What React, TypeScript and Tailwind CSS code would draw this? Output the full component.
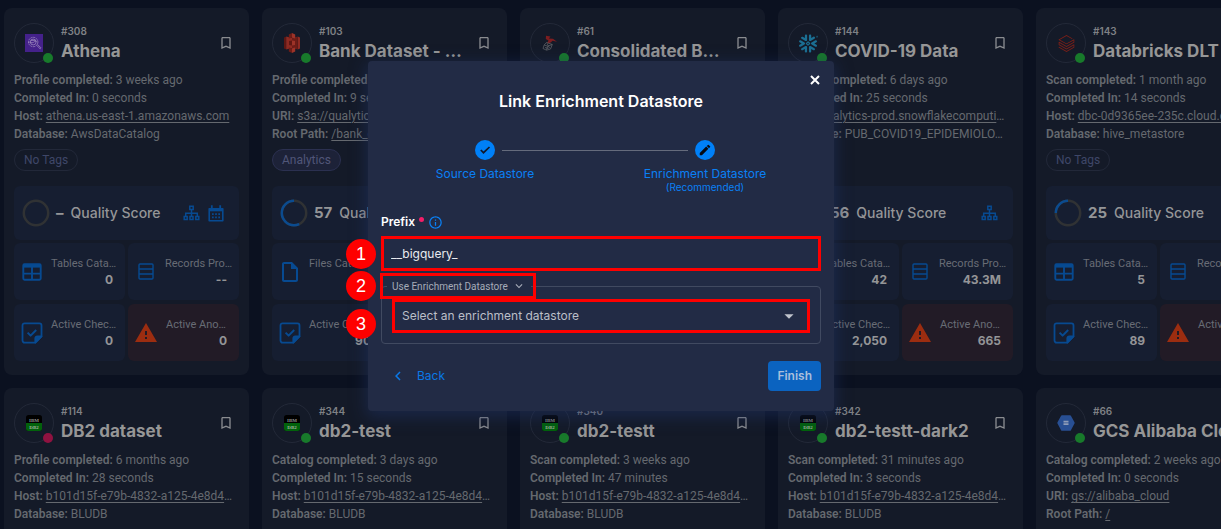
import React from 'react';
import {
  MdBookmarkBorder,
  MdChevronLeft,
  MdEdit,
  MdExpandMore,
  MdInfoOutline,
  MdArrowDropDown,
  MdWarning,
  MdOutlineInsertDriveFile,
} from 'react-icons/md';
import { SiDatabricks, SiSnowflake } from 'react-icons/si';

type Brand = 'athena' | 's3' | 'mssql' | 'snowflake' | 'databricks' | 'db2' | 'gcs';

type Detail = { label: string; value: string; link?: boolean; cut?: boolean };

type Store = {
  id: string;
  name: string;
  brand: Brand;
  down?: boolean;
  details: Detail[];
  tag?: string;
  tagFilled?: boolean;
  score: string;
  files?: boolean;
  calendar?: boolean;
  catalogued: string;
  records: string;
  checks: string;
  anomalies: string;
};

const db2Details = (verb: string, when: string, took: string): Detail[] => [
  { label: `${verb} completed:`, value: when },
  { label: 'Completed In:', value: took },
  { label: 'Host:', value: 'b101d15f-e79b-4832-a125-4e8d4', link: true, cut: true },
  { label: 'Database:', value: 'BLUDB' },
];

const empty = { tag: 'No Tags', score: '–', catalogued: '0', records: '--', checks: '0', anomalies: '0' };

const stores: Store[] = [
  {
    ...empty,
    id: '#308',
    name: 'Athena',
    brand: 'athena',
    details: [
      { label: 'Profile completed:', value: '3 weeks ago' },
      { label: 'Completed In:', value: '0 seconds' },
      { label: 'Host:', value: 'athena.us-east-1.amazonaws.com', link: true },
      { label: 'Database:', value: 'AwsDataCatalog' },
    ],
    calendar: true,
  },
  {
    id: '#103',
    name: 'Bank Dataset - …',
    brand: 's3',
    details: [
      { label: 'Profile completed:', value: '3 weeks ago' },
      { label: 'Completed In:', value: '9 seconds' },
      { label: 'URI:', value: 's3a://qualytics-data', link: true },
      { label: 'Root Path:', value: '/bank_dataset', link: true },
    ],
    tag: 'Analytics',
    tagFilled: true,
    score: '57',
    files: true,
    catalogued: '5',
    records: '10.1K',
    checks: '90',
    anomalies: '12',
  },
  {
    ...empty,
    id: '#61',
    name: 'Consolidated B…',
    brand: 'mssql',
    details: [
      { label: 'Profile completed:', value: '1 week ago' },
      { label: 'Completed In:', value: '6 seconds' },
      { label: 'Host:', value: 'database.windows.net', link: true },
      { label: 'Database:', value: 'qualytics' },
    ],
  },
  {
    id: '#144',
    name: 'COVID-19 Data',
    brand: 'snowflake',
    details: [
      { label: 'Profile completed:', value: '6 days ago' },
      { label: 'Completed In:', value: '25 seconds' },
      { label: 'Host:', value: 'analytics-prod.snowflakecomputi', link: true, cut: true },
      { label: 'Database:', value: 'PUB_COVID19_EPIDEMIOLO…' },
    ],
    score: '56',
    catalogued: '42',
    records: '43.3M',
    checks: '2,050',
    anomalies: '665',
  },
  {
    id: '#143',
    name: 'Databricks DLT',
    brand: 'databricks',
    details: [
      { label: 'Scan completed:', value: '1 month ago' },
      { label: 'Completed In:', value: '14 seconds' },
      { label: 'Host:', value: 'dbc-0d9365ee-235c.cloud.data', link: true, cut: true },
      { label: 'Database:', value: 'hive_metastore' },
    ],
    tag: 'No Tags',
    score: '25',
    catalogued: '5',
    records: '98.6K',
    checks: '89',
    anomalies: '30',
  },
  { ...empty, id: '#114', name: 'DB2 dataset', brand: 'db2', down: true, details: db2Details('Profile', '6 months ago', '28 seconds') },
  { ...empty, id: '#344', name: 'db2-test', brand: 'db2', details: db2Details('Catalog', '3 days ago', '15 seconds') },
  { ...empty, id: '#340', name: 'db2-testt', brand: 'db2', details: db2Details('Scan', '3 weeks ago', '47 minutes') },
  { ...empty, id: '#342', name: 'db2-testt-dark2', brand: 'db2', details: db2Details('Scan', '31 minutes ago', '3 seconds') },
  {
    ...empty,
    id: '#66',
    name: 'GCS Alibaba Cloud',
    brand: 'gcs',
    details: [
      { label: 'Catalog completed:', value: '2 weeks ago' },
      { label: 'Completed In:', value: '0 seconds' },
      { label: 'URI:', value: 'gs://alibaba_cloud', link: true },
      { label: 'Root Path:', value: '/', link: true },
    ],
  },
];

function BrandMark({ brand }: { brand: Brand }) {
  switch (brand) {
    case 'athena':
      return (
        <svg viewBox="0 0 18 18" className="size-[18px]" fill="none">
          <rect width="18" height="18" fill="#44218a" />
          <g stroke="#9a86bd" strokeWidth="0.8">
            <circle cx="8.2" cy="8" r="4.7" strokeDasharray="2 0.7" />
            <circle cx="8.2" cy="8" r="2.9" />
            <path d="M3 8.6c2-1.6 3.600 1.300 5.400-.2s2-.9 3.300-1M5.800 6.400h5M11.500 11.200l3.700 3.600M12.500 10.400l3.400 3.400-.8 1" />
          </g>
        </svg>
      );
    case 's3':
      return (
        <svg viewBox="0 0 18 20" className="h-5 w-[18px]">
          <path d="M1 4.500 3.200 3.500V16.500L1 15.500z" fill="#5f1713" />
          <path d="M17 4.500 14.800 3.500V16.500L17 15.500z" fill="#8e2a22" />
          <path d="M3.200 3.500 9 5v10l-5.800 1.500z" fill="#8e2a22" />
          <path d="M14.800 3.500 9 5v10l5.800 1.500z" fill="#6d1c17" />
          <path d="M9 0 5.800 1.600V5.600L9 4.800z" fill="#6d1c17" />
          <path d="M9 0l3.200 1.600v4L9 4.800zM9 7.600l3 .4v4l-3 .4z" fill="#9d3328" />
          <path d="M9 7.600 6 8v4l3 .4z" fill="#5f1713" />
          <path d="M9 20l-3.200-1.600v-4L9 15.200z" fill="#6d1c17" />
          <path d="M9 20l3.200-1.600v-4L9 15.200z" fill="#9d3328" />
        </svg>
      );
    case 'mssql':
      return (
        <svg viewBox="0 0 16 16" className="size-4" fill="none">
          <path d="M4 .8 8.500 1.500 6.800 3.500 11 3.800 15 6.800 10.500 5.800 8.800 7.500 5 8.500 6.500 5.500 3.800 4z" fill="#7d1d20" />
          <path d="M4.500 7.500 2.200 10 1 13.500l3.500 1.700 4-1.200 1.800-4.500z M2.200 10l3.500 1.200L4.500 15 M5.700 11.200l4.500-1.700 M3 12.500l3.500 1 M5 8.500l2.500 4.500" stroke="#66686d" strokeWidth="0.7" />
        </svg>
      );
    case 'snowflake':
      return <SiSnowflake className="size-[19px] text-[#1b6f93]" />;
    case 'databricks':
      return <SiDatabricks className="size-[17px] text-[#7d1f18]" />;
    case 'db2':
      return (
        <svg viewBox="0 0 16 16" className="size-4">
          <rect width="16" height="16" rx="2.500" fill="#000" />
          <path d="M0 8h16v5.500A2.500 2.500 0 0 1 13.500 16h-11A2.500 2.500 0 0 1 0 13.500z" fill="#02620b" />
          <text x="8" y="6.600" textAnchor="middle" fontSize="5" fontFamily="Liberation Serif, serif" fontWeight="700" fill="#8d8d8d">IBM</text>
          <text x="8" y="13.600" textAnchor="middle" fontSize="5" fontFamily="Liberation Serif, serif" fontWeight="700" fill="#9fb09f">DB2</text>
        </svg>
      );
    default:
      return (
        <svg viewBox="0 0 18 18" className="size-[18px]">
          <path d="M5 1.200h8a1 1 0 0 1 .9.500l3.600 6.600a1.300 1.300 0 0 1 0 1.300l-3.600 6.700a1 1 0 0 1-.9.500H5a1 1 0 0 1-.9-.5L.5 9.600a1.300 1.300 0 0 1 0-1.300l3.600-6.600a1 1 0 0 1 .9-.5z" fill="#284f93" />
          <path d="M6.500 6.800h5v1.700h-5zM6.500 9.300h5V11h-5z" fill="#8d9cb8" />
        </svg>
      );
  }
}

function SitemapIcon() {
  return (
    <svg viewBox="0 0 17 16" className="h-4 w-[17px]" fill="none" stroke="currentColor" strokeWidth="1.500">
      <path d="M6.800 1.200h3.400v3.300H6.800zM1.200 11.500h3v3h-3zM7 11.500h3v3H7zM12.800 11.500h3v3h-3zM8.500 4.500v7M2.700 11.500V8.200h11.600v3.300" />
    </svg>
  );
}

function CalendarIcon() {
  return (
    <svg viewBox="0 0 16 17" className="h-[17px] w-4" fill="none" stroke="currentColor">
      <path d="M1.200 3.700h13.600v12H1.200z" strokeWidth="1.600" strokeLinejoin="round" />
      <path d="M1 4.700h14" strokeWidth="3.200" />
      <path d="M3.800.2v3M12.200.2v3" strokeWidth="1.800" />
      <path d="M4 9.200h8M4 12.300h8" strokeWidth="1.700" strokeDasharray="1.700 1.450" />
    </svg>
  );
}

function TableIcon() {
  return (
    <svg viewBox="0 0 20 18" className="h-[18px] w-5" fill="none" stroke="currentColor">
      <rect x="1.300" y="1.300" width="17.400" height="15.400" rx="1.200" strokeWidth="1.900" />
      <path d="M1.500 3h17" strokeWidth="3.200" />
      <path d="M1.500 10.600h17M10 4v12.500" strokeWidth="1.900" />
    </svg>
  );
}

function RecordsIcon() {
  return (
    <svg viewBox="0 0 16 17" className="h-[17px] w-4" fill="none" stroke="currentColor" strokeWidth="1.400">
      <rect x="1" y="1" width="14" height="15" rx="1" />
      <path d="M1 6h14M1 11h14" />
    </svg>
  );
}

function NoteCheckIcon() {
  return (
    <svg viewBox="0 0 22 22" className="size-[22px]" fill="none" stroke="currentColor" strokeWidth="1.800" strokeLinejoin="round">
      <path d="M3.500 1.400h15a2 2 0 0 1 2 2v11l-6.200 6.200H3.500a2 2 0 0 1-2-2V3.400a2 2 0 0 1 2-2z" />
      <path d="M14.300 20.600v-4.200a2 2 0 0 1 2-2h4.200z" fill="currentColor" />
      <path d="M6.600 10.600l3 3 5.600-5.600" strokeWidth="2" />
    </svg>
  );
}

function ScoreRing({ score }: { score: string }) {
  const share = Number(score) || 0;
  return (
    <svg viewBox="0 0 28 28" className="size-7 shrink-0 -rotate-90" fill="none" strokeWidth="2.500">
      <circle cx="14" cy="14" r="12.200" stroke="#303234" />
      {share > 0 && (
        <circle
          cx="14"
          cy="14"
          r="12.200"
          stroke="#0b4b8f"
          pathLength={100}
          strokeDasharray={`${share} 100`}
          transform="matrix(1 0 0 -1 0 28)"
        />
      )}
    </svg>
  );
}

function Stat({ icon, label, value, alert }: { icon: React.ReactNode; label: string; value: string; alert?: boolean }) {
  return (
    <div className={`flex h-[57px] min-w-0 items-center rounded-md pr-3 ${alert ? 'bg-[#221b26] pl-[6px]' : 'bg-[#161e31] pl-[7px]'}`}>
      <span className={`flex shrink-0 justify-center ${alert ? 'w-6 text-[#9c2d10]' : 'w-[22px] text-[#074a91]'}`}>{icon}</span>
      <div className="flex min-w-0 flex-1 flex-col pl-2">
        <span className="font-['Roboto',sans-serif] text-[11px] leading-4 whitespace-nowrap text-[#686c75]">{label}</span>
        <span className="text-right text-xs leading-4 font-bold text-[#949597]">{value}</span>
      </div>
    </div>
  );
}

function StoreCard({ store }: { store: Store }) {
  return (
    <article className="rounded-lg bg-[#141a28] px-[10px] pt-[15px] pb-[14px]">
      <header className="flex h-10 items-center gap-[7px]">
        <div className="relative flex size-10 shrink-0 items-center justify-center rounded-full border border-[#232938]">
          <BrandMark brand={store.brand} />
          <span className={`absolute right-0 -bottom-px size-[10px] rounded-full ${store.down ? 'bg-[#8f1240]' : 'bg-[#187a2b]'}`} />
        </div>
        <div className="min-w-0 flex-1">
          <p className="text-[10px] leading-4 font-semibold text-[#7f8185]">{store.id}</p>
          <h2 className="text-[17px] leading-6 font-bold whitespace-nowrap text-[#969696]">{store.name}</h2>
        </div>
        <button type="button" aria-label={`Bookmark ${store.name}`} className="mr-[5px] text-[#8a8c90]">
          <MdBookmarkBorder className="size-4" />
        </button>
      </header>
      <ul className="mt-2 font-['Roboto',sans-serif] text-xs leading-[18px] whitespace-nowrap text-[#65696f]">
        {store.details.map((d) => (
          <li key={d.label}>
            <span className="font-semibold">{d.label}</span>{' '}
            {d.link ? <a href="#" className="underline underline-offset-2">{d.value}</a> : d.value}
            {d.cut && '…'}
          </li>
        ))}
      </ul>
      <div className="mt-[6px] flex h-[22px]">
        {store.tag && (
          <span className={`flex items-center rounded-full border px-[9px] font-['Roboto',sans-serif] text-xs ${store.tagFilled ? 'border-[#2b3050] bg-[#1d2238] text-[#515678]' : 'border-[#222839] text-[#3f4768]'}`}>
            {store.tag}
          </span>
        )}
      </div>
      <div className="mt-[15px] flex h-[54px] items-center rounded-md bg-[#161e31] pr-[15px] pl-2">
        <ScoreRing score={store.score} />
        <span className="pl-[6px] text-[15px] font-bold text-[#949597]">{store.score}</span>
        <span className="flex-1 pl-[7px] text-sm font-medium whitespace-nowrap text-[#949597]">Quality Score</span>
        <span className="flex items-center gap-2 text-[#074a91]">
          <SitemapIcon />
          {store.calendar && <CalendarIcon />}
        </span>
      </div>
      <div className="mt-[3px] grid grid-cols-2 gap-x-[3px] gap-y-1">
        <Stat
          icon={store.files ? <MdOutlineInsertDriveFile className="size-6 shrink-0" /> : <TableIcon />}
          label={store.files ? 'Files Catalo…' : 'Tables Cata…'}
          value={store.catalogued}
        />
        <Stat icon={<RecordsIcon />} label="Records Pro…" value={store.records} />
        <Stat icon={<NoteCheckIcon />} label="Active Chec…" value={store.checks} />
        <Stat icon={<MdWarning className="size-6 shrink-0" />} label="Active Ano…" value={store.anomalies} alert />
      </div>
    </article>
  );
}

function Callout({ n }: { n: number }) {
  return (
    <span className="absolute top-1/2 -left-[35px] flex size-[30px] -translate-y-1/2 items-center justify-center rounded-full bg-[#fe0000] font-['Liberation_Sans',sans-serif] text-lg leading-none text-white">
      {n}
    </span>
  );
}

function LinkDialog() {
  return (
    <div role="dialog" aria-modal="true" aria-labelledby="dialog-title" className="relative w-[466px] rounded bg-[#222b45] px-[13px] pb-5 shadow-[0_4px_16px_2px_rgba(32,52,104,0.5)]">
      <button type="button" aria-label="Close" className="absolute top-3 right-3 text-white">
        <svg viewBox="0 0 14 14" className="size-[14px]" fill="none" stroke="currentColor" strokeWidth="2">
          <path d="M3 3l8 8M11 3l-8 8" />
        </svg>
      </button>
      <h1 id="dialog-title" className="pt-7 text-center text-base leading-6 font-semibold text-white">
        Link Enrichment Datastore
      </h1>
      <ol className="relative mt-[27px] mr-[6px] -ml-[6px] grid grid-cols-2 text-xs text-[#0a80f5]">
        <li className="flex flex-col items-center">
          <span className="flex size-5 items-center justify-center rounded-full bg-[#0080f8] text-[#10182b]">
            <svg viewBox="0 0 14 14" className="size-[14px]" fill="none" stroke="currentColor" strokeWidth="1.700">
              <path d="M2.800 7l2.700 2.700 6-5.700" />
            </svg>
          </span>
          <span className="mt-[6px] leading-4">Source Datastore</span>
        </li>
        <li className="flex flex-col items-center">
          <span className="flex size-5 items-center justify-center rounded-full bg-[#0080f8] text-[#050a14]">
            <MdEdit className="size-[14px]" />
          </span>
          <span className="mt-[6px] leading-4">Enrichment Datastore</span>
          <span className="text-[10px] leading-[10px]">(Recommended)</span>
        </li>
        <li aria-hidden="true" className="absolute top-[10px] left-1/2 h-px w-[186px] -translate-x-1/2 bg-[#656b7c]" />
      </ol>

      <div className="mt-[22px] flex h-4 items-center">
        <label htmlFor="prefix" className="text-xs font-semibold text-white">Prefix</label>
        <span className="mb-[6px] ml-1 size-[5px] rounded-full bg-[#f51d68]" />
        <MdInfoOutline className="ml-1 size-[15px] text-[#0a80f5]" />
      </div>
      <div className="relative mt-[6px]">
        <input
          id="prefix"
          defaultValue="__bigquery_"
          className="block h-[35px] w-full border-[3px] border-[#fe0000] bg-transparent px-[7px] text-xs text-[#e9ebef] outline-none"
        />
        <Callout n={1} />
      </div>

      <fieldset className="mt-[2px] rounded border border-[#414a61] pb-[10px]">
        <legend className="relative ml-[5px] px-[5px]">
          <button type="button" className="flex h-[26px] items-center gap-1 font-['Roboto',sans-serif] text-[10px] text-[#a6abb8]">
            Use Enrichment Datastore
            <MdExpandMore className="size-[14px]" />
          </button>
          <span className="pointer-events-none absolute inset-y-0 -left-[7px] w-[156px] border-[3px] border-[#fe0000]" />
          <span className="absolute inset-y-0 -left-[6px]">
            <Callout n={2} />
          </span>
        </legend>
        <div className="relative mx-[10px]">
          <select
            aria-label="Enrichment datastore"
            className="block h-[34px] w-full appearance-none border-[3px] border-[#fe0000] bg-transparent px-[7px] text-xs text-[#bbbfc8] outline-none"
          >
            <option>Select an enrichment datastore</option>
          </select>
          <MdArrowDropDown className="pointer-events-none absolute top-[6px] right-[10px] size-[22px] text-[#c0c4cc]" />
          <span className="absolute top-[10px] -left-[11px] h-[30px]">
            <Callout n={3} />
          </span>
        </div>
      </fieldset>

      <div className="mt-[17px] flex items-center justify-between">
        <button type="button" className="flex items-center gap-[10px] pl-2 text-xs text-[#0a78e6]">
          <MdChevronLeft className="size-[18px]" />
          Back
        </button>
        <button type="button" className="h-[30px] rounded-sm bg-[#0b63c0] px-[9px] text-xs font-semibold text-[#a9bfdc]">
          Finish
        </button>
      </div>
    </div>
  );
}

export default function App() {
  return (
    <div className="relative h-screen overflow-hidden bg-[#0b1120] font-['Inter','Noto_Sans',sans-serif]">
      <main className="grid grid-cols-[repeat(5,minmax(245px,1fr))] gap-[13px] px-1 pt-2">
        {stores.map((s) => (
          <StoreCard key={s.id} store={s} />
        ))}
      </main>
      <div className="absolute inset-0 flex items-start justify-center pt-[61px] pr-[19px]">
        <LinkDialog />
      </div>
    </div>
  );
}
